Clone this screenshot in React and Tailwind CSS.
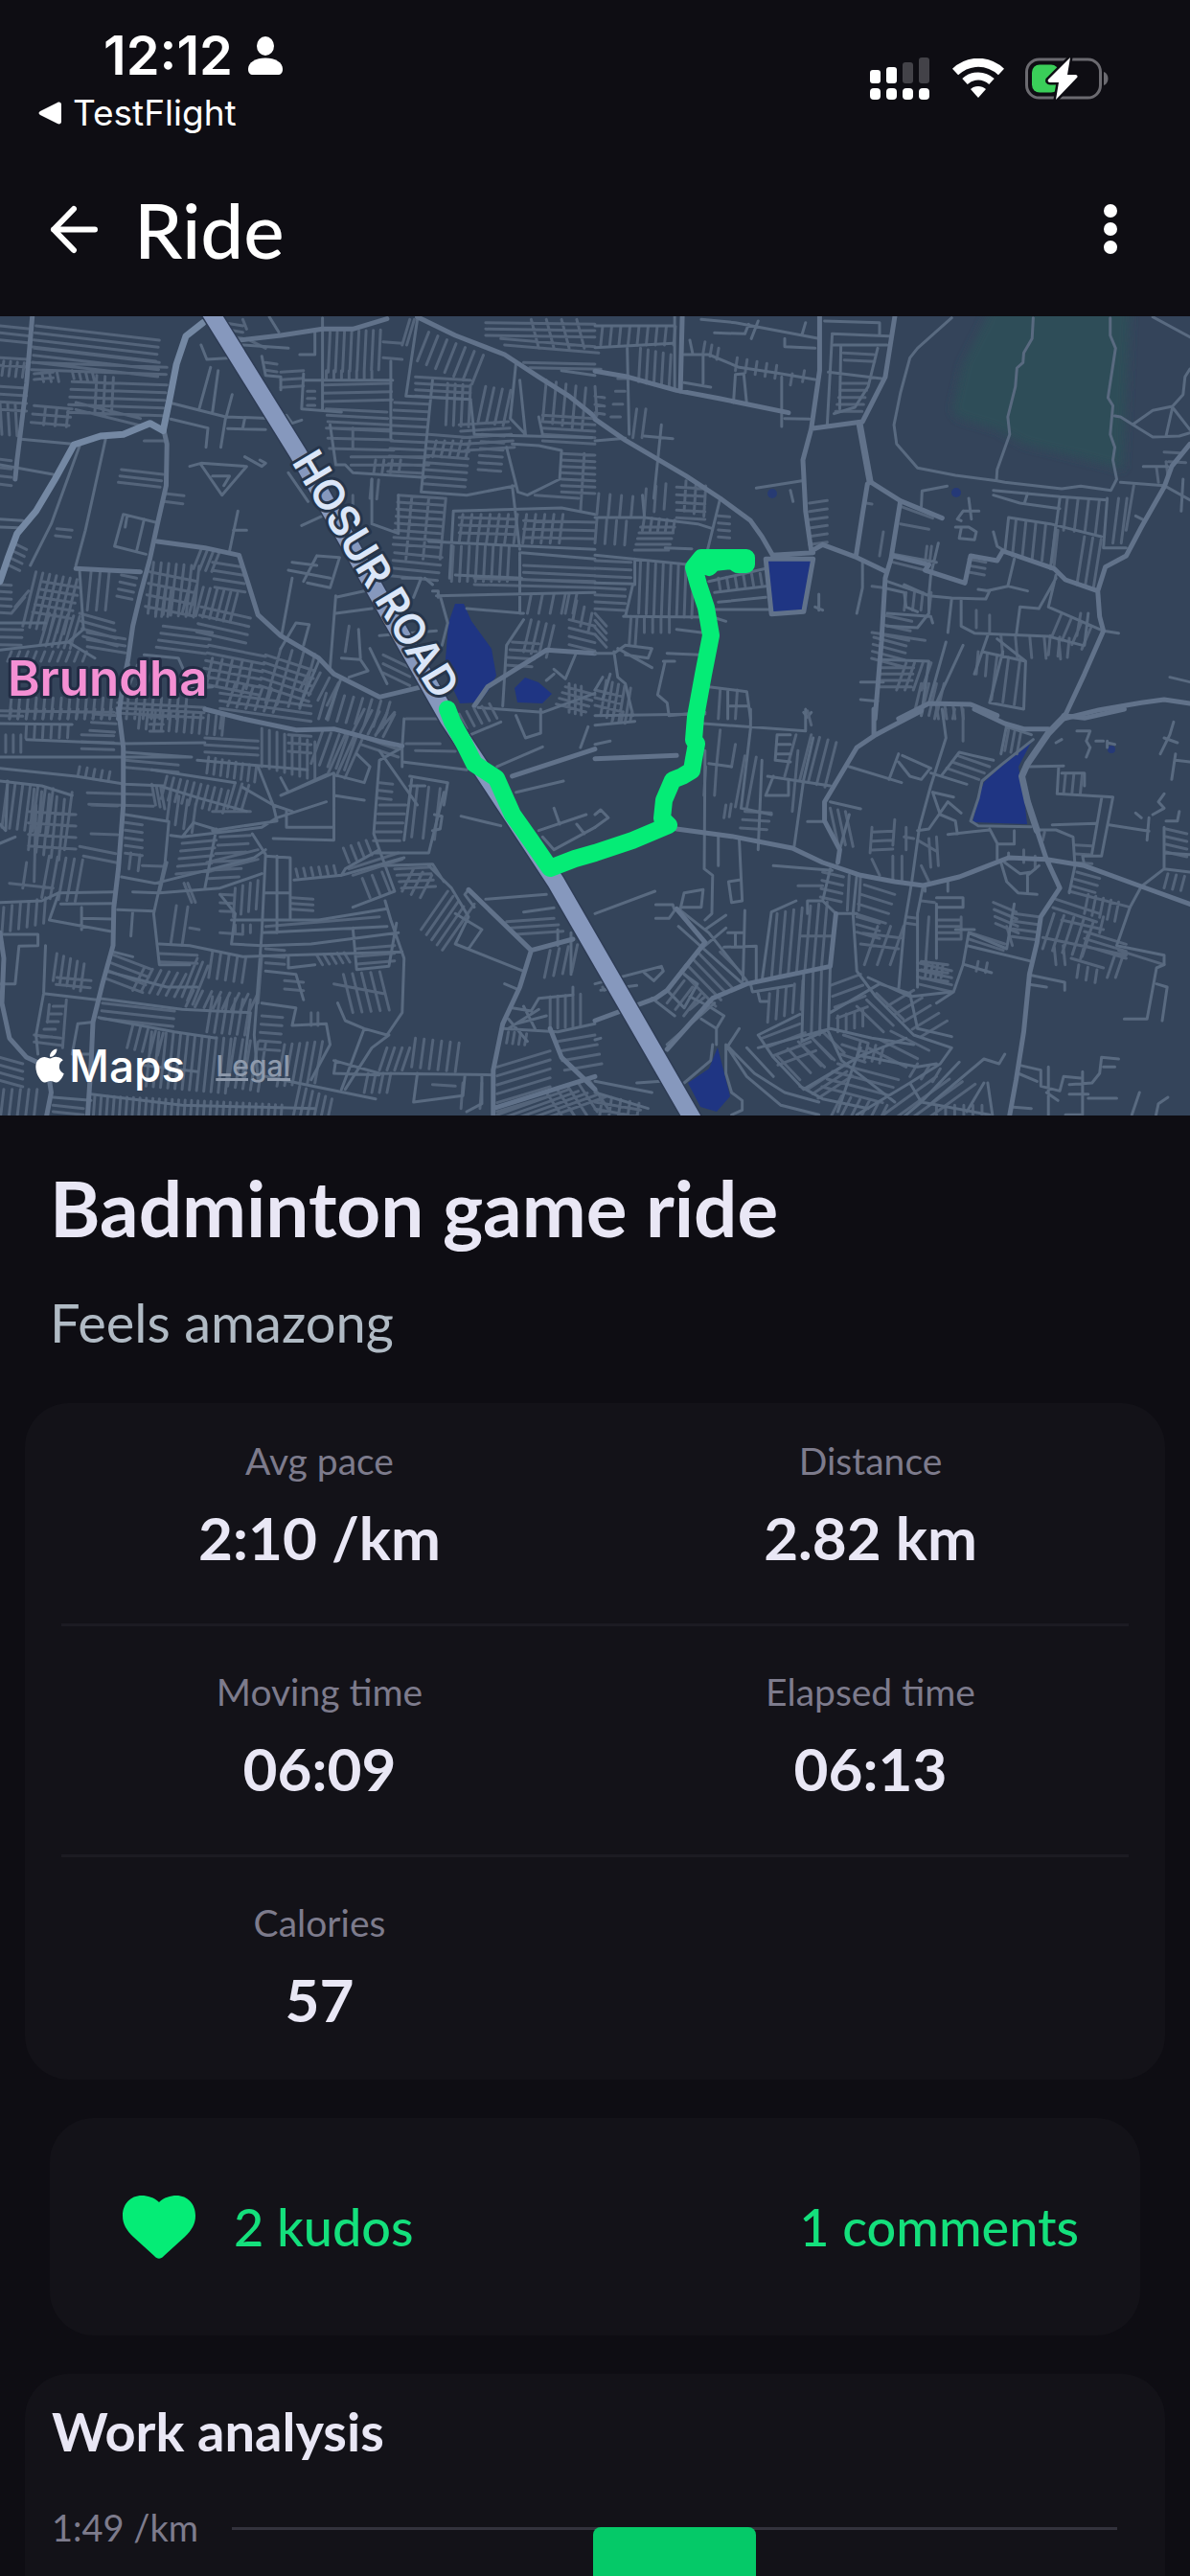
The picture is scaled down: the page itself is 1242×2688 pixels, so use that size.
import React from 'react';
import { FaApple } from 'react-icons/fa';

const STATS = [
  [{ label: 'Avg pace', value: '2:10 /km' }, { label: 'Distance', value: '2.82 km' }],
  [{ label: 'Moving time', value: '06:09' }, { label: 'Elapsed time', value: '06:13' }],
  [{ label: 'Calories', value: '57' }],
];

const BARS = [{ start: 40.8, width: 18.4 }];

// Each tile has its own 1568x1290 grid.
// streets: [x1, y1, x2, y2, stepX, stepY, count] = a run of parallel lanes
const TILES = [
  {
    transform: 'translate(0 -10) scale(0.396 0.33333)',
    wide: [
      'M535 50L490 92L465 180L447 290L430 388',
      'M430 388L395 365L325 400L265 405L195 432L145 540L95 640L45 710L20 790L0 860',
    ],
    mid: [
      'M432 388L440 430L438 560L415 680L395 790L370 900L350 1000L338 1100L322 1200L312 1290',
      'M1100 32L1200 90L1330 150L1420 220L1500 280L1568 345',
      'M630 105L740 90L850 70L930 70L1020 38',
      'M415 735L540 755L630 778L655 870L680 965L740 1030L840 1100L880 1150L1000 1222L1105 1192',
      'M85 32L70 240L45 480L40 540',
      'M200 820L370 830',
      'M1250 1250L1285 1190L1440 1075L1568 1085',
    ],
    thin: [
      'M55 415L190 430', 'M0 495L140 525', 'M210 435L135 680L80 810', 'M280 405L225 700L200 810', 'M850 35V320M1030 170V410',
      'M445 300L595 345L720 350M450 352L548 380L543 440M595 345L582 440M612 275L595 350M600 382L700 385M640 380L645 350',
      'M500 500L530 490L650 500L585 590L530 495M560 530H605L590 560', 'M645 470L690 500L700 490L685 480',
      'M325 650L302 750L385 775M325 650L410 675M335 655L330 690M380 665L360 765',
      'M0 665L60 670M0 690L50 692', 'M605 765L627 640M615 700H650', 'M770 850L742 1030',
      'M885 910L980 885M885 960L980 945M885 905L870 1130', 'M770 800L835 810M835 780L895 785L870 880L810 865M835 780L800 860M760 825L870 850',
      'M760 520L812 610M795 685L850 655', 'M800 210L795 320L900 330', 'M800 230H1035M790 150L830 150V80M640 120L760 130M690 155L700 215L740 220V260',
      'M555 190L525 320M575 200L560 330M530 120L545 165L620 160', 'M710 32L735 80M755 340L770 365L795 355',
      'M870 370L885 495L910 495L930 520L1120 535', 'M1350 430L1420 435L1480 450L1475 540L1390 590L1365 580L1335 440',
      'M1100 40L1070 280L1240 290L1250 400L1560 410', 'M1140 230L1110 580L1230 590L1360 560', 'M1360 175L1345 350L1385 400L1370 230',
      'M1350 560L1370 760M1195 640L1185 850M1195 640L1480 630L1568 650', 'M980 540V680L1050 710L1050 590',
      'M1130 735L1568 760M1370 770V960M1150 905L1568 895M1160 905L1180 990L1165 1060M1140 890H1155V910',
      'M1380 980L1335 1060L1325 1250M1230 945L1380 960', 'M1200 840L1375 850M1375 770L1568 790',
      'M1000 1030L1150 1015M900 1100L950 1105L970 1140L920 1160M975 1070L1020 1180M945 1010L950 1100',
      'M0 1075L180 1050L250 1100M180 1050L220 1010L210 830M0 990H120', 'M740 1070L780 990L815 995L800 1060',
      'M460 1200L560 1190M380 1090L470 1100L500 1180', 'M840 1110L790 1250M900 1160L860 1290', 'M1460 1135L1490 1165L1520 1080M1460 1150L1440 1170',
      'M1260 1255L1430 1270L1568 1210', 'M1480 200L1568 215M1420 345L1430 400', 'M1060 850L1110 850L1090 910M1120 850L1140 870',
    ],
    streets: [
      [95, 60, 420, 105, -3, 22, 4], [90, 130, 420, 175, -2, 22, 3], [85, 175, 440, 190, -2, 22, 2],
      [0, 60, 80, 70, 0, 22, 3], [0, 160, 75, 165, 0, 24, 2], [10, 170, 5, 215, 18, 2, 4], [0, 250, 70, 255, 0, 24, 4], [0, 300, 5, 400, 20, 2, 3],
      [90, 210, 140, 205, 0, 18, 2], [110, 205, 115, 235, 20, 0, 3], [190, 200, 195, 225, 18, 3, 4], [190, 235, 440, 245, -3, 24, 5],
      [255, 215, 250, 330, 22, 3, 3], [90, 310, 190, 320, -4, 26, 3], [120, 315, 115, 370, 30, 3, 3], [200, 300, 370, 350, 0, 22, 2],
      [320, 510, 430, 525, -4, 20, 3], [435, 585, 485, 592, -3, 25, 2], [380, 420, 435, 420, 0, 15, 1], [0, 478, 30, 482, 0, 26, 4],
      [150, 695, 190, 700, -4, 22, 2], [35, 740, 70, 760, -6, 22, 4], [95, 830, 60, 1000, 18, 4, 7], [110, 860, 210, 880, -6, 24, 5],
      [75, 890, 40, 940, -10, 20, 2], [0, 870, 30, 872, 0, 22, 5], [0, 1010, 60, 1012, -2, 24, 3], [130, 960, 105, 1060, 16, 2, 6],
      [210, 960, 300, 990, 3, 24, 4], [240, 830, 230, 950, 24, 0, 3], [320, 840, 360, 850, -4, 22, 4], [230, 1020, 330, 1040, 0, 22, 3],
      [405, 800, 390, 960, 20, 2, 7], [395, 830, 520, 860, -4, 36, 4], [530, 760, 510, 820, 16, 3, 4], [560, 800, 640, 815, 2, 26, 4],
      [500, 870, 480, 960, 18, 4, 8], [530, 940, 660, 975, -4, 26, 4], [430, 1000, 560, 1020, -6, 22, 4], [420, 880, 410, 970, 16, 0, 3],
      [550, 1060, 700, 1095, -4, 24, 6], [700, 1090, 830, 1140, -4, 24, 5], [740, 1070, 700, 1240, 30, 6, 4], [560, 1100, 545, 1180, 26, 4, 5],
      [30, 1080, 20, 1110, 22, 0, 10], [340, 1120, 320, 1180, 22, 2, 4], [0, 1265, 300, 1270, 0, 18, 1], [310, 1240, 540, 1255, -2, 16, 3], [30, 1225, 25, 1290, 22, 0, 22],
      [580, 1210, 820, 1250, 0, 24, 3], [620, 1180, 600, 1250, 24, 4, 6], [860, 1210, 840, 1290, 24, 4, 8], [820, 1130, 790, 1200, 24, 16, 4],
      [640, 40, 650, 70, 16, 0, 1], [590, 50, 640, 60, 0, 20, 3], [700, 175, 730, 180, 0, 24, 2], [740, 205, 800, 200, 0, 24, 3], [650, 100, 700, 130, 20, 0, 1],
      [870, 80, 865, 205, 19, -1, 8], [860, 200, 860, 225, 20, 0, 7], [850, 245, 1030, 240, 2, 26, 3], [860, 320, 1020, 330, 2, 20, 4], [810, 265, 830, 265, 0, 22, 3],
      [860, 380, 1030, 385, 4, 32, 3], [925, 470, 1130, 470, 0, 26, 2], [930, 380, 930, 440, 0, 0, 1], [1040, 300, 1130, 305, -2, 24, 10],
      [1080, 40, 1060, 120, 12, 0, 2], [1010, 110, 1060, 115, 0, 50, 2], [1130, 80, 1100, 170, 24, 12, 7], [1095, 220, 1240, 230, 0, 20, 4],
      [1180, 240, 1175, 370, 20, 2, 4], [1150, 420, 1140, 470, 22, 0, 5], [1130, 400, 1240, 410, -2, 22, 8], [1280, 250, 1260, 360, 22, 4, 4], [1210, 370, 1340, 360, 4, 20, 5],
      [1280, 50, 1568, 55, 0, 20, 3], [1320, 100, 1568, 125, 10, 20, 2], [1400, 40, 1420, 130, 40, 0, 4], [1380, 175, 1568, 180, 16, 16, 2],
      [1440, 230, 1430, 360, 26, 6, 5], [1430, 340, 1568, 350, 0, 20, 5], [1480, 460, 1568, 465, 0, 20, 7], [1270, 400, 1330, 405, -2, 22, 6], [1410, 590, 1525, 600, 0, 0, 1], [1540, 460, 1530, 640, 0, 0, 1],
      [980, 540, 975, 600, 18, 2, 2], [1050, 590, 1170, 600, -2, 22, 8], [1085, 600, 1070, 790, 45, 0, 3], [990, 480, 985, 520, 22, 0, 4],
      [1220, 650, 1210, 740, 24, 0, 12], [1210, 660, 1360, 665, 0, 24, 3], [1380, 670, 1568, 675, 0, 26, 3], [1195, 750, 1190, 860, 21, 0, 8],
      [1250, 850, 1568, 860, 0, 20, 2], [1380, 810, 1568, 820, 0, 22, 3], [1400, 900, 1390, 960, 30, 0, 5], [1040, 770, 1165, 785, -4, 24, 4],
      [1400, 980, 1380, 1080, 20, 6, 4], [1350, 1050, 1420, 1055, -6, 24, 4], [1500, 900, 1490, 960, 20, 20, 4], [1500, 980, 1568, 1000, 0, 26, 4],
      [1010, 1090, 1080, 1130, 0, 28, 3], [920, 1000, 910, 1080, 0, 0, 1], [1490, 1190, 1568, 1215, -8, 18, 4], [1500, 1180, 1500, 1270, 16, 4, 3], [930, 590, 930, 620, 0, 0, 1],
    ],
  },
  {
    transform: 'translate(621 -10) scale(0.396 0.33333)',
    wide: ['M697 365L725 548'],
    mid: [
      'M790 32L765 220L705 360L570 382L592 200L592 32',
      'M725 548L805 608L915 662M805 608L780 790L765 850L755 1050L738 1290',
      'M570 382L548 480L555 640L570 765L600 745L690 785L765 828',
      'M718 555L705 650L688 780',
      'M0 202L80 218L215 262L330 288L510 332',
      'M0 352L80 418L240 530L330 600L410 670L440 720L468 778L575 770',
      'M785 780L880 808L870 825L975 865L990 780L1060 795L1075 765L1210 820L1240 855L1325 890',
      'M1568 430L1520 500L1500 565L1440 690L1400 780L1345 815L1325 890L1330 970L1340 1015L1290 1150L1235 1290',
      'M1235 1290L1330 1262L1440 1240L1500 1230L1568 1242',
      'M800 1290L880 1242L990 1245L1060 1280',
      'M230 32L225 265M450 790L465 962L550 955L575 790Z',
    ],
    thin: [
      'M940 35L850 130L830 160L805 270L788 370L795 430L850 505L950 528L1060 545L1080 550L1230 570L1280 562L1360 575L1375 540L1365 480L1370 440L1358 400L1365 310L1352 285L1372 130L1358 90V35',
      'M1155 35L1152 100L1130 145L1128 175L1112 192L1108 250L1088 345L1093 400L1060 510L1058 545',
      'M1370 342L1385 345L1418 370L1470 408L1540 405L1568 395M1418 368L1470 325L1522 312L1550 275L1555 220L1568 195M1522 315L1568 385M1522 315L1505 405',
      'M1470 32L1568 95', 'M0 420L80 412', 'M210 32L210 260M85 130L90 400M0 60H210M0 128L205 115',
      'M280 40L370 50L590 100M405 55L395 85L315 82M555 50L545 90M430 45L412 100M605 45L750 50V85M625 85L775 92M500 100V125L580 130',
      'M235 150L300 150L380 190L480 208L580 228M250 105L258 150M285 150V240M235 238L305 252M365 300L370 212L392 210L400 305',
      'M492 220V375M500 350L565 352M625 90L612 370M648 125L645 320M630 120H770M615 205L755 225M745 130L720 250L685 315L630 335',
      'M425 568L545 545M515 575L522 610', 'M860 625L862 577L928 562M970 640H1012M985 600L992 665M970 640L955 665L965 670M950 690L985 690L1005 705L1000 730L960 725L965 695',
      'M175 370L155 600M130 405L205 413M0 660L130 660L270 680L310 695M330 600L295 770M125 590L130 655',
      'M185 755L255 758M0 778L250 808M0 865L100 868L80 970M105 790L105 870M75 970L310 972L345 985',
      'M300 860L450 820M315 895L450 875M325 925L450 910M290 948H460M580 940L600 950M590 900V950',
      'M1050 575L1225 595L1350 605M1050 590L1120 615L1225 632M1225 600L1200 820M1350 600L1340 755L1400 755M1140 585L1132 615',
      'M1090 660L1080 770M1090 660L1200 680L1335 720M1385 550L1500 560L1568 605M1445 500H1510M1425 655L1450 670M1050 705L1060 750L1080 765',
      'M705 800V880L690 960M1105 790L1088 875L1030 890M1088 875L1140 890M1010 885L1040 890L1030 915L940 912L880 905L770 860M815 870L880 905L885 840L905 740',
      'M965 915V1000L1000 1022L1195 1032L1285 1060M940 915L930 1020M1215 840L1195 940L1340 1015L1380 1022M1170 945L1120 940L1110 1030M1215 850L1170 945',
      'M1290 1060L1300 960M785 775L900 800M760 880L815 895L820 940L850 955M770 960L885 970L890 990M880 910L880 960L850 1005L770 1000',
      'M755 1105L880 1110L860 1280M925 1050L880 1240M970 1060L900 1240M1035 1030L1000 1150M1060 1040L1135 1110L1130 1260L1040 1240L1075 1080M1020 1080L1135 1110',
      'M215 1010L280 1020M190 1085L275 1090M180 1110L210 1110M185 1110L165 1215L190 1240L195 1280L290 1270M300 1190L400 1205L410 1290M350 1200V1290M355 1250H405',
      'M60 1070L150 1130M50 1080L60 1160L80 1180L100 1280M20 1160L0 1200M40 1150L20 1230M0 1085H50L80 1060L150 1070L140 1100L80 1090',
      'M700 1175L760 1175M700 1230L745 1235M1515 1160L1568 1175M1550 540L1545 640M550 1270L560 1285L570 1270',
    ],
    streets: [
      [20, 62, 15, 120, 24, 0, 9], [120, 130, 115, 235, 20, 5, 5], [60, 225, 85, 225, -6, 40, 4], [0, 250, 5, 340, 0, 0, 1], [0, 280, 25, 285, 0, 26, 3], [110, 320, 100, 410, 24, 0, 2],
      [290, 110, 285, 145, 18, 10, 3], [375, 160, 370, 200, 26, 6, 5], [520, 210, 515, 245, 32, -10, 2], [655, 145, 735, 150, 2, 22, 2], [650, 240, 720, 240, -4, 22, 5],
      [10, 585, 5, 650, 30, 3, 4], [5, 665, 0, 740, 26, 2, 4], [135, 570, 130, 650, 26, -8, 3], [215, 565, 290, 570, 0, 24, 5], [120, 690, 210, 690, -4, 18, 5], [130, 660, 125, 700, 20, 2, 5], [240, 545, 235, 640, 26, 8, 3],
      [325, 655, 355, 658, 0, 22, 4], [120, 800, 115, 960, 20, 2, 8], [0, 795, 95, 800, 0, 24, 3], [0, 880, 80, 885, 0, 22, 4], [325, 850, 330, 885, 22, -3, 6], [130, 975, 130, 1020, 22, 0, 4], [0, 960, 30, 1000, 0, 22, 4], [95, 970, 90, 1060, 16, 0, 2],
      [565, 615, 612, 607, 0, 26, 6], [805, 625, 890, 662, 0, 0, 1], [805, 680, 880, 697, 0, 0, 1], [760, 705, 750, 780, 0, 0, 1], [785, 800, 870, 825, 0, -18, 2], [875, 750, 870, 800, 12, 0, 2], [715, 615, 730, 618, 0, 0, 1], [985, 790, 1030, 800, -2, 20, 3],
      [1110, 665, 1100, 780, 26, 5, 5], [1245, 600, 1235, 700, 28, 3, 4], [1220, 700, 1210, 810, 30, 12, 1], [1290, 720, 1270, 870, 22, 4, 3], [1380, 600, 1365, 740, 22, 0, 2], [1420, 560, 1400, 700, 0, 0, 1], [1480, 505, 1485, 550, 25, -20, 2],
      [1500, 455, 1545, 458, 12, 30, 2], [1040, 965, 1040, 1020, -35, -15, 2], [1070, 1030, 1075, 1095, 38, 2, 5], [1230, 960, 1205, 1030, 26, 14, 4], [1060, 1090, 1045, 1230, 30, 8, 3], [1280, 960, 1270, 1030, 0, 0, 1],
      [760, 965, 835, 985, -4, 30, 3], [730, 1020, 870, 1045, -4, 0, 1], [735, 1035, 820, 1062, -2, 22, 4], [730, 875, 760, 880, 0, 0, 1], [820, 895, 815, 950, 22, 0, 4], [750, 1130, 840, 1130, -2, 20, 4], [820, 1115, 795, 1200, 22, 0, 4], [860, 1180, 840, 1280, 20, 0, 4], [900, 1250, 905, 1290, 22, 0, 4],
      [1010, 1080, 1005, 1150, 24, 6, 2], [1200, 1030, 1195, 1090, 25, 4, 3], [30, 1170, 15, 1280, 16, 6, 5], [0, 1200, 70, 1220, 0, 24, 3], [330, 1200, 325, 1290, 45, 0, 2],
    ],
  },
  {
    transform: 'translate(0 410) scale(0.396 0.33333)',
    wide: [],
    mid: [
      'M312 0L325 120L325 300L312 500L300 620L298 740L270 860L245 980L240 1110L230 1290',
      'M540 0L640 30L780 65L880 62L1000 100L1060 115',
      'M0 700L10 780L5 920L25 1030L70 1090L125 1120L135 1200L120 1290',
      'M1400 755L1370 870L1325 985L1300 1130L1300 1290',
      'M1235 565L1400 755L1510 720M1450 1000L1480 1090L1568 1190',
      'M1300 1250L1568 1150M1350 210L1568 125',
    ],
    thin: [
      'M0 45L190 48M70 95L320 108L540 105M0 150L500 150M0 185L200 210L330 235L430 240M0 225L110 240L190 270',
      'M330 135L505 150M520 160L810 190M400 190L620 230M420 240L530 280L650 320M330 330L445 352L435 480L420 560L405 640L420 800L500 800',
      'M0 605L110 600L155 575L300 572M155 575L130 660L290 695M160 610L298 608M215 620V690M215 655L298 657',
      'M320 525L410 545L560 500L670 465L700 440M440 480L420 575L580 560L690 515M570 375L540 560M480 400L690 370L730 340L860 290M450 395L480 400L510 355L565 375',
      'M350 572L420 575M310 628L405 632M350 630L345 710M420 735L500 740L640 775L755 770M560 380L730 350L720 300L640 245M680 180L720 300L770 320M665 390L700 455L690 700L680 860L670 1020L680 1160',
      'M700 460L765 465L765 660M700 575H765M730 460V700M720 405L880 410L880 200L740 270M740 215L760 260L860 205M880 205L960 230L975 180L940 140M880 370H755V320',
      'M775 535L900 520L1065 465M900 520L910 500L1000 440L985 390L1000 160L1060 120L1065 30M1000 440L1040 570L930 620M990 450L1130 450L1170 260M1130 490L1190 560L1235 650L1200 735L1380 820',
      'M1010 490L1140 485L1170 540M1080 210L1180 230L1170 300M1085 220L1065 410M1080 240H1120M1145 330L1165 335L1160 375L1140 380M880 270L960 285',
      'M580 580L620 640L610 735L690 740M610 660L840 660L1020 625M690 700L1020 680M690 740L820 735L1050 700M760 770L1060 760M760 770V810L830 800M1015 600L1030 660L1065 780L1060 950L1020 1020L960 1000L910 975L890 920',
      'M930 685L940 815L1025 805L1045 670M700 820L780 830L800 910M690 920L780 935L770 990L860 985L870 1050L820 1160M960 1000L900 1190M1025 1020L980 1060L910 1190M1000 130L1100 300',
      'M115 890L255 910M120 740L115 890L95 1020L100 1080M260 905L480 940L660 950L640 1150M280 820L440 870L520 870M260 965L460 1010L570 1030M300 760L350 775',
      'M0 360L15 380L20 225M40 400L0 420M0 705L100 705V740L50 742L40 860H0M240 980L205 985L190 1080L240 1080M880 1100L1000 1140L1300 1145M885 1100L880 1140L1000 1145M1100 1140L1090 1230L1220 1210L1225 1150M1230 1260L1270 1235V1150',
      'M240 1205L480 1240L830 1250M380 1115L520 1135M700 1150L990 1220M140 1215L240 1225M1215 335L1320 365M1280 595L1440 580M1060 165L1230 190M1060 180V110',
      'M1420 380L1545 330M1430 400L1460 440L1568 370M1460 310L1475 360M1520 360L1540 390M1310 180L1430 118M1360 260L1485 225M1230 85L1320 40',
      'M1360 20L1385 90L1425 75V0M1530 120L1550 55M1325 1000L1470 1010L1568 985M1350 935L1400 945L1420 905L1510 895V870M1340 1000L1420 940M1360 985L1440 960M1340 970L1390 1040M1380 930L1410 1000',
      'M1235 565L1225 580L1250 620M1200 640L1270 690L1235 750M1330 860L1360 875M1505 700V830M1470 690V740M1380 635L1460 622',
    ],
    streets: [
      [30, 0, 25, 30, 22, 0, 13], [0, 20, 60, 22, 0, 0, 1], [70, 50, 68, 90, 22, 0, 6], [215, 80, 300, 83, 0, 22, 3], [245, 15, 310, 20, -4, 26, 3], [370, 0, 365, 60, 20, 2, 12], [395, 25, 430, 25, 0, 22, 3], [15, 80, 15, 135, 20, 0, 3],
      [540, 90, 680, 100, 0, 22, 3], [585, 15, 580, 60, 0, 0, 1], [690, 60, 690, 180, 20, 6, 8], [760, 80, 820, 85, 0, 26, 3], [850, 70, 820, 170, 22, 5, 5], [950, 110, 1050, 150, 0, -24, 2], [1040, 10, 990, 80, 16, 4, 1], [910, 80, 865, 200, 22, 8, 3], [960, 0, 930, 70, 20, 4, 5],
      [330, 160, 470, 175, 0, 22, 2], [550, 150, 545, 200, 18, 4, 8], [210, 180, 205, 210, 20, 4, 5], [440, 210, 425, 280, 18, 5, 10], [230, 262, 400, 268, 4, 36, 2], [400, 235, 410, 300, 12, 6, 3], [450, 260, 440, 350, 22, 12, 4], [560, 320, 660, 320, 0, 24, 1], [620, 230, 600, 310, 18, 4, 3],
      [20, 230, 5, 370, 20, 3, 7], [90, 250, 75, 440, 20, 8, 5], [75, 320, 200, 330, 0, 36, 4], [240, 300, 310, 303, 0, 90, 2], [190, 260, 170, 440, 0, 0, 1], [210, 430, 305, 452, 10, 30, 2], [70, 480, 60, 560, 0, 0, 1], [130, 460, 110, 590, 22, 3, 5], [25, 545, 140, 560, 0, 0, 1], [95, 300, 90, 540, 0, 0, 1],
      [10, 620, 5, 700, 22, -6, 6], [330, 355, 375, 362, 0, 24, 5], [345, 450, 340, 500, 24, 6, 2], [375, 490, 430, 492, 0, 0, 1], [480, 420, 570, 410, -4, 24, 5], [580, 400, 660, 395, -6, 26, 6], [545, 480, 680, 440, 0, 30, 2], [495, 545, 515, 605, -10, 0, 2],
      [465, 615, 450, 735, 30, 4, 2], [500, 685, 525, 690, 0, 0, 1], [420, 765, 520, 770, 0, 26, 2], [620, 560, 615, 650, 20, -8, 4], [580, 580, 615, 582, 0, 26, 3], [580, 700, 640, 705, 0, 0, 1], [620, 675, 620, 700, 20, 0, 3],
      [770, 590, 825, 595, 0, 18, 3], [780, 500, 785, 525, 20, -2, 6], [905, 435, 920, 480, 20, -8, 4], [955, 530, 975, 590, 26, -10, 3], [920, 500, 1050, 450, 10, 20, 2], [1000, 230, 1035, 235, -2, 24, 3], [1000, 300, 1070, 300, -4, 28, 5], [1100, 240, 1085, 400, 30, 4, 3], [1040, 500, 1130, 495, 6, 20, 4], [1090, 500, 1060, 570, 24, 10, 3],
      [1180, 570, 1110, 690, 14, 16, 5], [1250, 610, 1210, 680, 0, 0, 1], [700, 680, 1000, 650, 0, 0, 1], [835, 770, 850, 800, 18, -2, 5], [940, 750, 1040, 740, 0, 24, 3], [905, 830, 930, 950, 24, -2, 5], [880, 860, 1010, 890, 0, 0, 1],
      [150, 765, 140, 850, 18, 8, 5], [150, 840, 240, 850, -2, 22, 2], [300, 770, 400, 815, -8, 24, 4], [380, 810, 350, 880, 22, 4, 6], [270, 920, 460, 945, -2, 24, 3], [140, 930, 170, 930, -8, 24, 5], [175, 910, 165, 1060, 0, 0, 1], [130, 925, 125, 980, 0, 0, 1],
      [520, 780, 480, 900, 14, 12, 3], [560, 760, 550, 840, 22, 4, 5], [510, 880, 490, 930, 24, 2, 8], [690, 770, 680, 920, 30, 0, 1], [700, 750, 750, 755, 0, 22, 3], [750, 850, 800, 855, 0, 26, 2], [690, 960, 745, 965, -2, 26, 5], [560, 900, 545, 1010, 20, 2, 6],
      [350, 990, 335, 1060, 20, 6, 5], [400, 1010, 385, 1180, 19, 2, 12], [620, 1030, 600, 1180, 20, 4, 5], [750, 1050, 730, 1180, 20, -2, 6], [820, 950, 820, 990, 18, 0, 2], [250, 1210, 245, 1290, 17, 1, 30], [790, 1180, 770, 1290, 17, 8, 6],
      [0, 1090, 60, 1110, 0, 24, 4], [10, 1190, 0, 1290, 22, 0, 5], [140, 1240, 220, 1250, 0, 20, 2], [90, 1020, 160, 1030, 0, 22, 2],
      [1095, 1030, 1085, 1120, 23, 3, 6], [1020, 1060, 1000, 1130, 20, 0, 4], [970, 1140, 960, 1200, 20, 0, 4], [1140, 1175, 1200, 1180, 0, 0, 1], [1220, 1170, 1215, 1250, 50, 0, 2], [1310, 1120, 1450, 1070, 0, 28, 6], [1310, 1270, 1500, 1190, 24, 6, 5], [1440, 1200, 1490, 1290, 28, -10, 5],
      [1335, 665, 1460, 655, 12, 20, 3], [1450, 755, 1435, 840, 24, -6, 4], [1450, 900, 1450, 1000, 20, -2, 5], [1470, 1040, 1568, 1020, 6, 30, 4], [1340, 1010, 1335, 1045, 16, 2, 4], [1210, 15, 1230, 60, 20, -8, 5], [1070, 30, 1160, 30, 0, 78, 2], [1095, 130, 1200, 132, 0, 0, 1],
    ],
  },
  {
    transform: 'translate(621 410) scale(0.396 0.33333)',
    wide: ['M1240 20L1195 75L1140 170L1125 210L1140 290L1165 380'],
    mid: [
      'M215 375L360 398L520 435L600 480L700 520L790 540L865 552L960 525L1090 465L1190 470',
      'M1165 380L1190 470L1225 560L1175 650L1165 730L1145 830L1130 1010L1110 1160L1090 1290',
      'M1000 0L1080 45L1130 62L1195 62', 'M1235 20L1290 28L1395 0', 'M860 5L740 80L690 120L605 290L605 350L645 440L640 480',
      'M735 0V80', 'M1190 470L1290 490L1440 555L1568 610', 'M0 155L215 145', 'M0 975L160 905L190 880L290 730L215 625',
      'M190 1065L310 905L400 860L620 805L635 640',
    ],
    thin: [
      'M285 45L555 68M410 60L385 310L465 330M410 0V60M555 0L555 68M0 50L105 38M0 110L40 100M0 640L158 570M0 20L290 15',
      'M290 130L288 500L310 520L308 640L290 660M300 170L360 180M380 405L388 600L360 605L352 540L380 535M325 400V490M470 490L625 505',
      'M670 180L808 230M915 0L925 90L885 240L855 370L835 540L815 680L800 880M645 440L670 330M560 352H605M620 290L700 312',
      'M575 90L550 220L525 430M455 210L620 240M470 210L450 270H510V220M440 160L430 440M480 80L475 160L515 165M480 80H515M480 110H515M480 140H515',
      'M800 140L775 220M810 145L885 185M915 205L960 135L1050 160M885 200L980 235M800 165L830 210L860 220L880 190M890 260L945 275M890 260L910 330L950 350L955 390M850 380L880 375L930 290L965 325',
      'M1040 375L1060 420V470M930 392L1040 378M1060 422H1105V380M1090 465V450M1070 480L1085 540L1115 575L1165 580M1140 575V520L1170 490M1080 480L1120 515L1150 510',
      'M1140 180L1235 178M1222 180L1218 265L1365 275L1335 460H1285L1290 490M1230 200L1290 200V240M1335 280L1310 450M1205 362L1320 358M1165 378H1215L1260 400L1265 490L1250 575M1355 362L1460 382',
      'M1500 370V500L1440 555L1410 620L1375 740M1500 500L1568 510M1500 450L1568 455M1460 340L1455 410M1505 350L1535 350L1540 320M1395 970H1455L1480 810L1500 800V770L1375 740M1480 860L1508 870L1495 975',
      'M1145 832L1238 855V880M1145 862L1190 870M980 740L1145 788M985 700L970 800L945 885L900 920M985 700L1085 750L1105 610',
      'M865 552L850 640L850 870M870 560V570M930 540V570M900 610V780M900 590H970V620H900M690 520L680 640L690 820L740 900L840 1020L940 1060L910 1110L830 1170L860 1230L800 1290',
      'M620 500L600 600L635 640M600 600H560V640M640 640L690 640M530 600L465 635L440 850M220 625L300 700L400 850M225 625L235 575L285 565L280 620H225M160 612H205L210 630L195 655H160M220 680L390 860M345 645L290 690M345 685L280 750M340 745L425 742V850M395 630L390 850M370 700V740M350 700H390',
      'M240 800L190 880L235 935L270 860L235 830M150 905L210 960M250 900L300 930L340 960L320 1000L280 970M320 1000V1050M350 1055L420 1140L500 1200L590 1230M350 1055L380 1000M350 1060L400 1150L490 1240L590 1270M190 1050L315 920M410 860L415 885L520 865M430 890L435 915L455 915',
      'M430 1020L470 1090L550 1190L700 1085L820 1030M430 1020L540 955M430 1060L620 1000M620 805L615 1010L650 1100L790 1230M550 830L545 1040L620 1000L730 1030L840 1050M400 1060L470 1150M620 950L750 860L830 890L850 1000L940 1025M640 1260L680 1120L700 1060M720 840L830 900L940 885',
      'M690 1270L830 1170M700 1085L850 1120L900 1110M860 1230L960 1105M880 1240L1025 1095L1065 1110L1080 1080M1025 1170L980 1260M1035 1170L1050 1290M860 1230L1040 1270M540 1180L600 1220L720 1250M950 690L1000 690M975 800L1045 825',
      'M0 860L175 805L180 820L155 850L130 825M15 880L110 865M0 1165L150 1200M0 1200L140 1250M110 1170L175 1165M310 1050L305 1100L235 1170M345 1050V1140L360 1200L388 1225V1255L360 1270M0 1035L15 1030',
      'M1120 1115L1175 1130V1180L1225 1195L1235 1150L1280 1155M1115 1140L1165 1165M1195 1120V1290M1250 1175L1310 1170L1330 1140L1335 1090L1380 1095M1340 1120L1370 1120M1285 1135V1270L1240 1270M1300 1218H1375M1250 1205H1300M1095 1245L1150 1250M1435 1200L1415 1270M1510 1215L1485 1235L1475 1290M1190 1200L1220 1225',
      'M1270 68H1305L1295 100L1305 120L1295 150M1525 40L1515 80L1490 140M1500 90L1535 105M1530 140L1520 220M1530 160L1568 165M1500 265L1485 290L1500 310L1470 330M1425 325L1440 340M1320 100H1340M1350 105L1370 110M1215 105L1230 95M1350 100V120',
      'M1085 50L1070 140M1085 55L1150 80M1155 95L1070 175L1020 225L1010 280L990 350L1010 365L1150 368M0 370L35 340L15 315L0 330',
    ],
    streets: [
      [50, 10, 45, 40, 24, -2, 3], [330, 65, 320, 180, 0, 0, 1], [425, 150, 400, 310, -30, -4, 2], [530, 80, 500, 210, 0, 0, 1], [570, 80, 540, 220, 22, 8, 4], [370, 110, 360, 180, 0, 0, 1], [535, 130, 520, 320, 22, 0, 1], [395, 320, 465, 325, -6, 26, 3], [345, 300, 340, 340, 14, -3, 2], [560, 5, 570, 50, -18, 0, 1], [320, 180, 315, 270, -28, 0, 2],
      [620, 310, 640, 420, 20, 5, 3], [730, 370, 725, 450, 60, -24, 2], [730, 385, 785, 382, 0, 28, 3], [730, 470, 750, 520, 0, 0, 1], [785, 460, 785, 535, 24, 0, 2], [820, 370, 820, 440, 0, 0, 1], [850, 410, 900, 445, 0, 22, 1], [900, 400, 905, 490, -20, 5, 2], [860, 490, 880, 540, 20, -50, 1], [815, 400, 840, 405, 0, 0, 1],
      [955, 145, 1040, 180, -14, 20, 3], [900, 0, 895, 30, 24, 0, 3], [970, 0, 970, 100, 0, 0, 1], [1090, 65, 1080, 130, 16, 5, 3], [1240, 205, 1235, 265, 22, 0, 3],
      [1265, 425, 1310, 428, 0, 28, 3], [1270, 510, 1330, 530, -6, 22, 3], [1185, 385, 1180, 410, 0, 0, 1], [1130, 440, 1130, 480, 30, 20, 2], [1505, 375, 1560, 390, 0, 24, 4], [1510, 515, 1500, 560, 22, 4, 3],
      [600, 510, 655, 525, -2, 26, 4], [535, 553, 600, 553, 0, 0, 1], [670, 520, 665, 630, 30, 0, 2], [710, 550, 790, 580, -8, 30, 4], [690, 650, 750, 670, 0, 24, 3], [745, 680, 710, 800, 34, 0, 3], [700, 735, 800, 750, 6, -34, 2], [820, 650, 850, 655, 0, 20, 2], [880, 650, 870, 820, 24, 4, 1],
      [905, 660, 965, 660, 0, 20, 4], [965, 650, 965, 720, 0, 0, 1], [860, 600, 895, 605, 0, 0, 1], [1050, 605, 1110, 635, 2, 22, 4], [1105, 640, 1170, 650, -2, 24, 4], [990, 700, 1080, 735, -4, 20, 2], [1010, 790, 1005, 820, 24, 4, 2], [1085, 680, 1100, 740, 0, 0, 1],
      [480, 640, 465, 845, 22, -6, 7], [540, 710, 630, 710, 0, 0, 1], [270, 760, 360, 870, -14, 20, 4], [330, 760, 390, 830, 0, 0, 1], [235, 850, 190, 920, 22, 20, 4], [460, 890, 455, 980, 22, -10, 5], [575, 820, 570, 1020, 22, 0, 2], [620, 865, 700, 830, 6, 34, 4],
      [480, 1085, 540, 1160, 28, -22, 4], [545, 1050, 605, 1120, 26, -22, 3], [440, 1030, 540, 985, 14, 28, 4], [640, 960, 640, 1010, 22, -6, 4], [690, 930, 760, 1010, 26, -20, 3], [655, 1020, 720, 1045, -4, 30, 3], [700, 1040, 690, 1090, 20, 6, 4], [720, 1060, 820, 1120, 30, -26, 3],
      [770, 930, 840, 880, 22, 24, 5], [850, 860, 940, 885, 0, -22, 4], [875, 800, 870, 840, 14, 0, 4], [860, 790, 930, 800, 0, 26, 3], [640, 1110, 800, 1160, -14, 24, 4], [560, 1190, 650, 1120, 14, 14, 3], [650, 1210, 620, 1280, 24, 6, 6], [760, 1270, 900, 1150, 34, 8, 4], [900, 1240, 900, 1290, 24, 0, 6], [850, 1110, 830, 1150, 30, 8, 3],
      [1215, 595, 1330, 640, -8, 26, 2], [1210, 640, 1180, 750, 26, 6, 5], [1300, 580, 1290, 640, 20, 6, 5], [1180, 715, 1400, 770, 4, -26, 1], [1340, 650, 1330, 700, 0, 0, 1], [1290, 740, 1400, 780, 0, -22, 3], [1230, 660, 1340, 690, 0, 0, 1], [1255, 780, 1340, 810, 0, 0, 1], [1275, 800, 1270, 840, 24, 8, 3], [1370, 770, 1350, 840, 22, 0, 2], [1300, 700, 1280, 780, 0, 0, 1],
      [1250, 570, 1410, 620, 0, 0, 1], [1380, 755, 1500, 800, 0, 0, 1], [1210, 740, 1215, 800, 24, 0, 2], [0, 1230, 120, 1255, 0, 22, 2], [20, 1210, 10, 1290, 24, 6, 5], [250, 940, 290, 900, 0, 0, 1], [20, 870, 25, 880, 60, 0, 2],
    ],
  },
];

const ROUTE =
  'M467 410L472 423L485 447L495 467L518 482L526 500L535 520L554 547L574 576L600 566L621 560L660 547L698 531L691 524L693 505L702 484L712 480L722 474L724 462L727 446L724 442L726 418L734 374L742 333L737 304L729 280L724 262L732 252L779 252L779 259L770 259L764 255L745 257L740 262L732 258';

const streetPath = (runs) =>
  runs
    .map(([x1, y1, x2, y2, dx, dy, n]) =>
      Array.from({ length: n }, (_, i) => `M${x1 + dx * i} ${y1 + dy * i}L${x2 + dx * i} ${y2 + dy * i}`).join('')
    )
    .join('');

function RideMap() {
  return (
    <section className="relative">
      <svg viewBox="0 0 1242 834" className="block w-full h-auto bg-[#34445a]" role="img" aria-label="Ride route">
        <defs>
          <filter id="soft" x="-10%" y="-10%" width="120%" height="120%">
            <feGaussianBlur stdDeviation="5" />
          </filter>
        </defs>

        {/* Park */}
        <path
          d="M1035 -10L1005 50L994 98L1000 106L1040 118L1070 134L1120 146L1172 160L1180 -10Z"
          fill="#2d4d58"
          filter="url(#soft)"
        />

        {/* Lakes */}
        <g fill="#1f3583">
          <path d="M475 300L484 300L492 318L513 347L518 375L510 390L500 403L480 404L464 370L468 320Z" />
          <path d="M537 388L548 377L562 382L576 394L566 404L540 403Z" />
          <path d="M801 254L849 254L842 306L806 309Z" />
          <path d="M1078 441L1063 470L1070 512L1072 530L1015 528L1022 500L1027 486L1050 465Z" />
          <path d="M749 763L756 790L762 814L748 830L731 825L718 800L740 785Z" />
          <circle cx="806" cy="185" r="5" opacity="0.6" />
          <circle cx="998" cy="184" r="5" opacity="0.7" />
          <circle cx="1160" cy="452" r="4" opacity="0.7" />
        </g>

        {/* Streets */}
        {TILES.map((tile, i) => (
          <g key={i} transform={tile.transform} fill="none" strokeLinecap="round" strokeLinejoin="round">
            <path d={streetPath(tile.streets)} stroke="#54647a" strokeWidth="3" vectorEffect="non-scaling-stroke" />
            <path d={tile.thin.join('')} stroke="#596a80" strokeWidth="3" vectorEffect="non-scaling-stroke" />
            <path d={tile.mid.join('')} stroke="#61728a" strokeWidth="5" vectorEffect="non-scaling-stroke" />
            <path d={tile.wide.join('')} stroke={i === 0 ? '#7488a3' : '#61728a'} strokeWidth="7" vectorEffect="non-scaling-stroke" />
          </g>
        ))}

        {/* Highway */}
        <path d="M216 -10L311 143L468 420L580 590L730 850" fill="none" stroke="#2e3c55" strokeWidth="21" />
        <path d="M216 -10L311 143L468 420L580 590L730 850" fill="none" stroke="#8698bd" strokeWidth="18" />

        <path d={ROUTE} fill="none" stroke="#05ec76" strokeWidth="18" strokeLinecap="round" strokeLinejoin="round" />

        {/* Labels */}
        <g fontFamily="Inter, sans-serif" strokeLinejoin="round" paintOrder="stroke">
          <text
            x="304"
            y="152"
            transform="rotate(59 304 152)"
            fontSize="44"
            fontWeight="600"
            fill="#dbe6f8"
            stroke="#26354b"
            strokeWidth="6"
          >
            HOSUR ROAD
          </text>
          <text x="8" y="396" fontSize="51" fontWeight="600" fill="#f48fd3" stroke="#222c44" strokeWidth="6">
            Brundha
          </text>
        </g>
      </svg>

      <div className="absolute bottom-6 left-8 flex items-center font-[Inter,sans-serif]">
        <FaApple className="size-10 text-white" />
        <span className="text-[46px] leading-[56px] font-medium text-white">Maps</span>
        <a href="#legal" className="ml-8 text-[30px] leading-8 font-medium text-[#8e9aac] underline">Legal</a>
      </div>
    </section>
  );
}

function StatusBar() {
  return (
    <div className="flex items-start justify-between pt-7 pl-10 pr-[84px] text-white font-[Inter,sans-serif]">
      <div>
        <div className="flex items-center gap-4 pl-[68px]">
          <span className="text-[56px] leading-[60px] font-semibold">12:12</span>
          <svg viewBox="0 0 36 40" className="w-9 h-10" fill="currentColor">
            <ellipse cx="18" cy="10" rx="9" ry="10" />
            <path d="M0 34C0 27 8 22.500 18 22.500S36 27 36 34C36 38 34 40 31 40H5C2 40 0 38 0 34Z" />
          </svg>
        </div>
        <a href="#testflight" className="flex items-center gap-3 text-[37px] leading-[60px]">
          <svg viewBox="0 0 24 24" className="size-6" fill="currentColor">
            <path d="M2 10L20 1C22 0 24 1 24 3V21C24 23 22 24 20 23L2 14C0 13 0 11 2 10Z" />
          </svg>
          TestFlight
        </a>
      </div>

      <div className="flex items-center mt-8">
        <svg viewBox="0 0 62 44" className="w-[62px] h-11" fill="currentColor">
          <rect x="0" y="13" width="11" height="14" rx="3" />
          <rect x="17" y="10" width="11" height="17" rx="3" />
          <rect x="34" y="5" width="11" height="22" rx="3" fill="#434248" />
          <rect x="51" y="0" width="11" height="27" rx="3" fill="#434248" />
          <rect x="0" y="32" width="11" height="12" rx="4" />
          <rect x="17" y="32" width="11" height="12" rx="4" />
          <rect x="34" y="32" width="11" height="12" rx="4" />
          <rect x="51" y="32" width="11" height="12" rx="4" />
        </svg>
        <svg viewBox="0 0 54 42" className="w-[54px] h-[42px] ml-6" fill="none" stroke="currentColor">
          <path d="M3 14C17 1 37 1 51 14" strokeWidth="9" />
          <path d="M13 24C21 16.500 33 16.500 41 24" strokeWidth="8" />
          <path d="M27 41L19 32C23.500 28 30.500 28 35 32Z" fill="currentColor" stroke="none" />
        </svg>
        <svg viewBox="0 0 88 44" className="w-[88px] h-11 ml-[22px]">
          <rect x="1.500" y="2" width="77" height="40" rx="13" fill="none" stroke="#6b6a70" strokeWidth="3" />
          <path d="M82 15C88 17 88 27 82 29Z" fill="#6b6a70" />
          <rect x="7" y="7.500" width="28" height="29" rx="8" fill="#3ace59" />
          <path
            d="M47 0L24 23C23 24.500 24 26 26 26H35L32 44L54 21C55.500 19.500 54 18 52 18H44Z"
            fill="#fff"
            stroke="#0e0d13"
            strokeWidth="5"
            paintOrder="stroke"
          />
        </svg>
      </div>
    </div>
  );
}

export default function App() {
  return (
    <div className="min-h-screen flex flex-col overflow-hidden bg-[#0e0d13] text-[#e9e7f5] font-[Lato,sans-serif]">
      <StatusBar />

      <header className="flex items-center h-[182px] pl-12 pr-16 text-white">
        <button aria-label="Back" className="cursor-pointer">
          <svg viewBox="0 0 56 56" className="size-14" fill="none" stroke="currentColor" strokeWidth="6" strokeLinecap="round" strokeLinejoin="round">
            <path d="M29 7L8 28.500L29 50M8 28.500H51" />
          </svg>
        </button>
        <h1 className="ml-9 text-[80px] leading-[96px] font-medium">Ride</h1>
        <button aria-label="More options" className="ml-auto cursor-pointer">
          <svg viewBox="0 0 38 56" className="w-[38px] h-14" fill="currentColor">
            <circle cx="19" cy="9" r="7" />
            <circle cx="19" cy="28" r="7" />
            <circle cx="19" cy="47" r="7" />
          </svg>
        </button>
      </header>

      <RideMap />

      <div className="px-[52px] pt-12">
        <h2 className="text-[80px] leading-[96px] font-bold">Badminton game ride</h2>
        <p className="mt-10 text-[56px] leading-[64px] text-[#b0bac4]">Feels amazong</p>
      </div>

      {/* Stats */}
      <section className="mx-[26px] mt-[52px] px-5 rounded-[46px] bg-[#131218]">
        {STATS.map((row, i) => (
          <div key={i} className="group">
            <dl className="grid grid-cols-2 pt-11 pb-[54px] group-first:pt-9 group-last:pb-12 text-center">
              {row.map(stat => (
                <div key={stat.label}>
                  <dt className="text-[39px] leading-[48px] text-[#7d7b8c]">{stat.label}</dt>
                  <dd className="mt-5 text-[62px] leading-[72px] font-bold">{stat.value}</dd>
                </div>
              ))}
            </dl>
            <div className="mx-[18px] h-[3px] bg-[#1c1b22] group-last:hidden" />
          </div>
        ))}
      </section>

      {/* Kudos */}
      <section className="flex items-center justify-between mx-[52px] mt-10 h-[227px] pl-[76px] pr-16 rounded-[46px] bg-[#131218] text-[54px] leading-[64px] font-medium text-[#14e07c]">
        <button className="flex items-center gap-10 cursor-pointer">
          <svg viewBox="0 0 76 66" className="w-[76px] h-[66px]" fill="#05ec76">
            <path d="M38 7C43 2 50 0 56 0C68 0 76 9 76 21C76 30 72 36 65 43L43 63C40 66.500 36 66.500 33 63L11 43C4 36 0 30 0 21C0 9 8 0 20 0C26 0 33 2 38 7Z" />
          </svg>
          2 kudos
        </button>
        <button className="cursor-pointer">1 comments</button>
      </section>

      {/* Work analysis */}
      <section className="flex-1 flex flex-col mx-[26px] mt-10 pt-7 pl-7 pr-[50px] rounded-t-[46px] bg-[#131218]">
        <h3 className="text-[56px] leading-[64px] font-bold">Work analysis</h3>
        <div className="flex-1 flex mt-11">
          <span className="w-[188px] shrink-0 text-[38px] leading-[48px] text-[#7d7b8c]">1:49 /km</span>
          <div className="flex-1 flex mt-6 border-t-[3px] border-[#33323c]">
            {BARS.map(bar => (
              <div
                key={bar.start}
                className="-mt-[3px] rounded-t-lg bg-[#05c968]"
                style={{ marginLeft: `${bar.start}%`, width: `${bar.width}%` }}
              />
            ))}
          </div>
        </div>
      </section>
    </div>
  );
}
